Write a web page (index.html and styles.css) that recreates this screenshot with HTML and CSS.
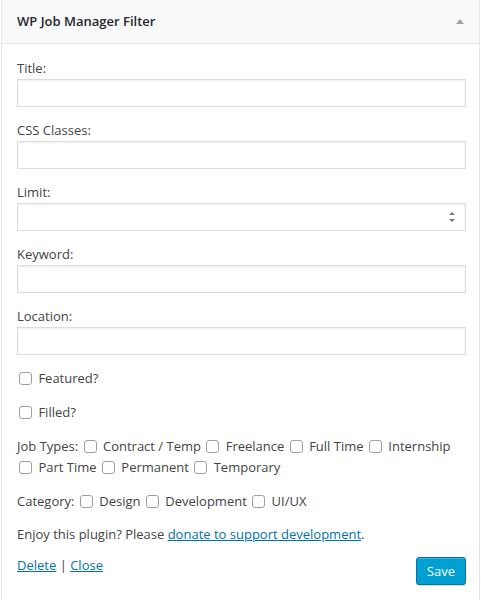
FILE: index.html
```html
<!DOCTYPE html>
<html>
<head>
<meta charset="utf-8">
<link rel="stylesheet" href="styles.css">
</head>
<body>
<div class="widget">
  <div class="widget-top">
    <h3 class="widget-title">WP Job Manager Filter</h3>
    <svg class="toggle" width="8" height="5" viewBox="0 0 8 5"><path d="M4 0 L8 5 L0 5 Z" fill="#a0a5aa"/></svg>
  </div>
  <div class="widget-inside">
    <p class="field"><label class="lbl">Title:</label><input class="txt" type="text"></p>
    <p class="field"><label class="lbl">CSS Classes:</label><input class="txt" type="text"></p>
    <p class="field"><label class="lbl">Limit:</label>
      <span class="numbox"><input class="numinput" type="text"><span class="spin"><span class="up"></span><span class="down"></span></span></span>
    </p>
    <p class="field"><label class="lbl">Keyword:</label><input class="txt" type="text"></p>
    <p class="field"><label class="lbl">Location:</label><input class="txt" type="text"></p>
    <p class="checks"><input class="cb" type="checkbox"> <label>Featured?</label></p>
    <p class="checks"><input class="cb" type="checkbox"> <label>Filled?</label></p>
    <p class="checks">Job Types: <input class="cb" type="checkbox"> <label>Contract / Temp</label> <input class="cb" type="checkbox"> <label>Freelance</label> <input class="cb" type="checkbox"> <label>Full Time</label> <input class="cb" type="checkbox"> <label>Internship</label> <input class="cb" type="checkbox"> <label>Part Time</label> <input class="cb" type="checkbox"> <label>Permanent</label> <input class="cb" type="checkbox"> <label>Temporary</label></p>
    <p class="checks">Category: <input class="cb" type="checkbox"> <label>Design</label> <input class="cb" type="checkbox"> <label>Development</label> <input class="cb" type="checkbox"> <label>UI/UX</label></p>
    <p class="note">Enjoy this plugin? Please <a href="#">donate to support development</a>.</p>
    <div class="actions">
      <div class="links"><a href="#">Delete</a> | <a href="#">Close</a></div>
      <button class="save" type="button">Save</button>
    </div>
  </div>
</div>
</body>
</html>
```

FILE: styles.css
```css
html, body {
  margin: 0;
  padding: 0;
  background: #fff;
}
body {
  font-family: "Open Sans", "Liberation Sans", sans-serif;
  font-size: 13px;
  color: #444;
  line-height: 19.5px;
}
.widget {
  margin-left: 1px;
  width: 479px;
  box-sizing: border-box;
  border-left: 1px solid #e5e5e5;
  border-right: 1px solid #e5e5e5;
  min-height: 600px;
}
.widget-top {
  height: 43px;
  background: #f9f9f9;
  border-bottom: 1px solid #e5e5e5;
  display: flex;
  align-items: center;
  justify-content: space-between;
  padding: 0 15px;
}
.widget-title {
  margin: 0;
  font-size: 13px;
  font-weight: 600;
  color: #23282d;
}
.toggle {
  display: block;
  margin-top: -1px;
}
.widget-inside {
  padding: 1px 13px 15px 15px;
}
.field {
  margin: 13px 0 0;
}
.lbl {
  display: block;
  line-height: 20px;
}
.txt, .numbox {
  display: block;
  box-sizing: border-box;
  width: 100%;
  height: 28px;
  margin: 1px 0 0;
  border: 1px solid #ddd;
  box-shadow: inset 0 1px 2px rgba(0,0,0,.07);
  background: #fff;
  font: inherit;
  padding: 3px 5px;
}
.numbox {
  display: flex;
  align-items: center;
  padding: 0 10px 0 5px;
}
.numinput {
  flex: 1;
  border: none;
  outline: none;
  background: transparent;
  font: inherit;
  min-width: 0;
  padding: 0;
}
.spin {
  display: flex;
  flex-direction: column;
  align-items: center;
  gap: 4px;
}
.up, .down {
  width: 0;
  height: 0;
  border-left: 3px solid transparent;
  border-right: 3px solid transparent;
}
.up {
  border-bottom: 3px solid #777;
}
.down {
  border-top: 3px solid #777;
}
.checks {
  margin: 13px 0 0;
  line-height: 21px;
}
.cb {
  -webkit-appearance: none;
  appearance: none;
  width: 13px;
  height: 13px;
  box-sizing: border-box;
  border: 1px solid #9aa0a4;
  border-radius: 3px;
  background: #fff;
  margin: 0 3px 0 2px;
  vertical-align: middle;
  position: relative;
  top: -1px;
}
.note {
  margin: 13px 0 0;
}
a {
  color: #0073aa;
  text-decoration: underline;
}
.actions {
  display: flex;
  justify-content: space-between;
  align-items: flex-start;
  margin-top: 11px;
}
.save {
  margin-top: 1px;
  height: 28px;
  padding: 0 10px;
  border: 1px solid #0073aa;
  border-radius: 3px;
  background: #00a0d2;
  color: #fff;
  font: inherit;
  line-height: 26px;
  box-shadow: inset 0 1px 0 rgba(120,200,230,.5), 0 1px 0 rgba(0,0,0,.15);
}
```
